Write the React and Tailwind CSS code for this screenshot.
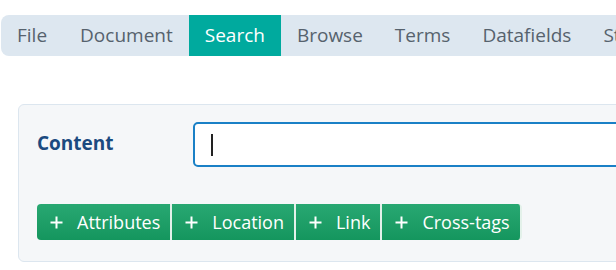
import React from 'react';

const tabs = ['File', 'Document', 'Search', 'Browse', 'Terms', 'Datafields', 'Styles'];
const actions = ['Attributes', 'Location', 'Link', 'Cross-tags'];

const App = () => {
  return (
    <div className="w-[616px] h-[270px] overflow-hidden bg-white pt-[15px] pl-px" style={{ fontFamily: '"Open Sans", "Noto Sans", sans-serif' }}>
      {/* top menu */}
      <nav className="flex h-[41px] w-[700px] rounded-l-lg bg-[#dde7f0] text-[19px] text-[#56626d]">
        {tabs.map((t, i) => (
          <div
            key={t}
            className={
              t === 'Search'
                ? 'flex items-center px-4 bg-[#00aa9e] text-white'
                : i === 0
                ? 'flex items-center pl-4 pr-[17px]'
                : 'flex items-center px-4'
            }
          >
            {t}
          </div>
        ))}
      </nav>

      {/* search panel */}
      <div className="mt-[48px] ml-[17px] w-[700px] h-[158px] rounded-md border border-[#dce6ef] bg-[#f5f7f9] pl-[18px] pt-[17px]">
        <div className="flex items-center">
          <label className="w-[156px] -mt-[3px] text-[19px] font-bold text-[#1b4a80]">Content</label>
          <div className="flex h-[45px] flex-1 items-center rounded-[5px] border-2 border-[#1a80c6] bg-white pl-4">
            <span className="h-[22px] w-[2px] bg-[#222]"></span>
          </div>
        </div>

        <div className="mt-[37px] flex">
          {actions.map((a, i) => (
            <button
              key={a}
              className={
                'flex h-[36px] items-center gap-[14px] bg-gradient-to-b from-[#28a872] to-[#14965e] pl-[13px] pr-[10px] text-[18px] text-white border-r-2 border-[#e3f1ea] ' +
                (i === 0 ? 'rounded-l-[4px] ' : '') +
                (i === actions.length - 1 ? 'rounded-r-[4px] border-r-0' : '')
              }
            >
              <svg width="13" height="13" viewBox="0 0 13 13" className="shrink-0">
                <path d="M6.5 0.5v12M0.5 6.5h12" stroke="white" strokeWidth="2" />
              </svg>
              {a}
            </button>
          ))}
        </div>
      </div>
    </div>
  );
};

export default App;
